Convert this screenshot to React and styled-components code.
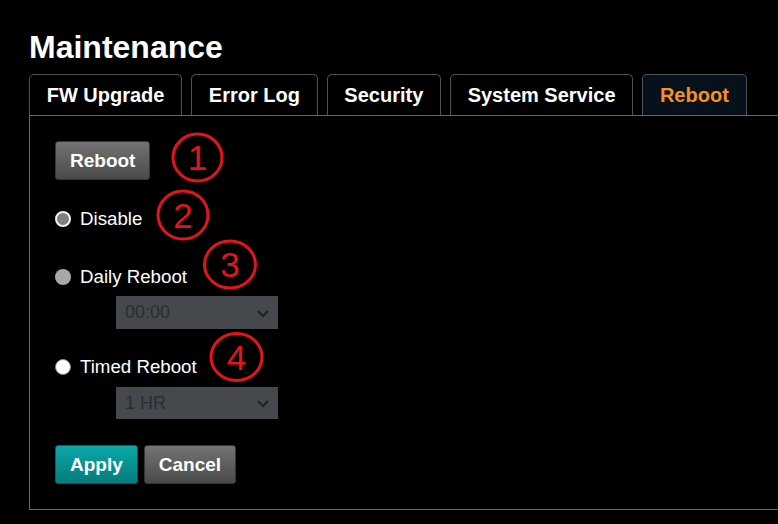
import styled, { createGlobalStyle } from 'styled-components';

const GlobalStyle = createGlobalStyle`
  html, body {
    margin: 0;
    padding: 0;
    background: #000;
    overflow: hidden;
  }
  body {
    font-family: 'Liberation Sans', Arial, sans-serif;
    color: #fff;
  }
`;

const tabs = ['FW Upgrade', 'Error Log', 'Security', 'System Service', 'Reboot'];

const marks = [
  { n: 1, cx: 197.5, cy: 157.5, rx: 24.5, ry: 23.5 },
  { n: 2, cx: 183, cy: 215, rx: 25, ry: 24 },
  { n: 3, cx: 230, cy: 264.5, rx: 25.5, ry: 23.5 },
  { n: 4, cx: 236.5, cy: 357, rx: 25.5, ry: 23.5 },
];

const App = () => {
  return (
    <>
      <GlobalStyle />
      <StyledPage>
        <StyledTitle>Maintenance</StyledTitle>

        <StyledTabs>
          {tabs.map((t) => (
            <StyledTab key={t} $active={t === 'Reboot'}>
              {t}
            </StyledTab>
          ))}
        </StyledTabs>

        <StyledPanel>
          <StyledButton>Reboot</StyledButton>

          <StyledOption $mt={28}>
            <StyledRadio $kind='ring' />
            Disable
          </StyledOption>

          <StyledOption $mt={36}>
            <StyledRadio $kind='solid' />
            Daily Reboot
          </StyledOption>
          <StyledSelect $mt={8} $h={33}>
            <span>00:00</span>
            <Chevron />
          </StyledSelect>

          <StyledOption $mt={27}>
            <StyledRadio $kind='empty' />
            Timed Reboot
          </StyledOption>
          <StyledSelect $mt={9} $h={32}>
            <span>1 HR</span>
            <Chevron />
          </StyledSelect>

          <StyledActions>
            <StyledButton $primary>Apply</StyledButton>
            <StyledButton>Cancel</StyledButton>
          </StyledActions>
        </StyledPanel>

        <StyledMarks width='778' height='524' viewBox='0 0 778 524'>
          {marks.map((m) => (
            <g key={m.n}>
              <ellipse
                cx={m.cx}
                cy={m.cy}
                rx={m.rx}
                ry={m.ry}
                fill='none'
                stroke='#e3141b'
                strokeWidth='3'
              />
              <text
                x={m.cx}
                y={m.cy + 12.5}
                textAnchor='middle'
                fontSize='35'
                fill='#e3141b'
                fontFamily="'Liberation Sans', Arial, sans-serif"
              >
                {m.n}
              </text>
            </g>
          ))}
        </StyledMarks>
      </StyledPage>
    </>
  );
};

const Chevron = () => (
  <svg width='14' height='10' viewBox='0 0 14 10'>
    <polyline points='2,3 7,8 12,3' fill='none' stroke='#1f2225' strokeWidth='2' />
  </svg>
);

// Styles
const StyledPage = styled.div`
  position: relative;
  width: 778px;
  height: 524px;
  padding-left: 29px;
  box-sizing: border-box;
`;

const StyledTitle = styled.h1`
  margin: 0;
  padding-top: 29px;
  font-size: 32px;
  line-height: 37px;
  font-weight: 700;
`;

const StyledTabs = styled.div`
  display: flex;
  gap: 9px;
  margin-top: 8px;
`;

const StyledTab = styled.div`
  height: 39px;
  display: flex;
  align-items: center;
  padding: 1px 16.7px 0;
  border: 1px solid #4f5257;
  border-bottom: none;
  border-radius: 5px 5px 0 0;
  font-size: 20px;
  font-weight: 700;
  color: ${({ $active }) => ($active ? '#f7901e' : '#fff')};
  background: ${({ $active }) => ($active ? '#07111c' : '#000')};
`;

const StyledPanel = styled.div`
  border-top: 1px solid #62656a;
  border-left: 1px solid #62656a;
  border-bottom: 1px solid #62656a;
  padding: 25px 0 25px 25px;
  display: flex;
  flex-direction: column;
  align-items: flex-start;
`;

const StyledButton = styled.button`
  height: 39px;
  padding: 0 14px;
  border: 1px solid #2e2e2e;
  border-radius: 3px;
  font-family: inherit;
  font-size: 19px;
  font-weight: 700;
  color: #fff;
  cursor: pointer;
  background: ${({ $primary }) =>
    $primary
      ? 'linear-gradient(#0aa8a8, #067b7c)'
      : 'linear-gradient(#737373, #4a4a4a)'};
  border-color: ${({ $primary }) => ($primary ? '#065f60' : '#353535')};
`;

const StyledOption = styled.label`
  display: flex;
  align-items: center;
  gap: 9px;
  height: 22px;
  margin-top: ${({ $mt }) => $mt}px;
  font-size: 18.7px;
  color: #fff;
`;

const StyledRadio = styled.span`
  width: 16px;
  height: 16px;
  box-sizing: border-box;
  border-radius: 50%;
  ${({ $kind }) =>
    $kind === 'ring'
      ? 'background: #7f7f7f; border: 2px solid #f2f2f2;'
      : $kind === 'solid'
      ? 'background: #a8a8a8;'
      : 'background: #fff; border: 1px solid #8a8a8a;'}
`;

const StyledSelect = styled.div`
  width: 162px;
  height: ${({ $h }) => $h}px;
  margin-top: ${({ $mt }) => $mt}px;
  margin-left: 61px;
  box-sizing: border-box;
  padding: 0 8px 0 9px;
  display: flex;
  align-items: center;
  justify-content: space-between;
  background: #45484d;
  color: #2a2d31;
  font-size: 18px;
`;

const StyledActions = styled.div`
  display: flex;
  gap: 6px;
  margin-top: 26px;
`;

const StyledMarks = styled.svg`
  position: absolute;
  top: 0;
  left: 0;
  pointer-events: none;
`;

export default App;
